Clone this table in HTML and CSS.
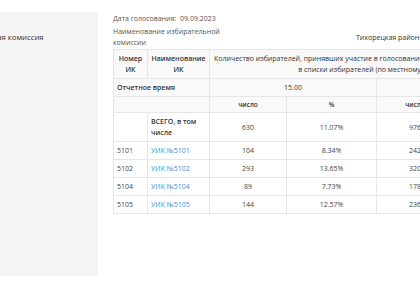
FILE: index.html
```html
<!DOCTYPE html>
<html lang="ru">
<head>
<meta charset="utf-8">
<title>Сведения о явке</title>
<link rel="stylesheet" href="styles.css">
</head>
<body>
<div class="page">
  <aside class="sidebar">
    <div class="side-item">Избирательная комиссия</div>
  </aside>
  <main class="main">
    <div class="info-row">
      <span class="label">Дата голосования:</span>
      <span class="value">09.09.2023</span>
    </div>
    <div class="name-row">
      <div class="label name-label">Наименование избирательной комиссии</div>
      <div class="name-value">Тихорецкая районная территориальная избирательная комиссия</div>
    </div>
    <table class="turnout">
      <colgroup>
        <col class="c-num">
        <col class="c-name">
        <col class="c-cnt">
        <col class="c-pct">
        <col class="c-cnt">
        <col class="c-pct">
      </colgroup>
      <thead>
        <tr>
          <th class="center">Номер ИК</th>
          <th class="center">Наименование ИК</th>
          <th colspan="4" class="center reg">Количество избирателей, принявших участие в голосовании, и процент от числа включенных<br>в списки избирателей (по местному времени)</th>
        </tr>
        <tr>
          <th colspan="2" class="left">Отчетное время</th>
          <th colspan="2" class="center reg">15.00</th>
          <th colspan="2" class="center reg">20.00</th>
        </tr>
        <tr class="sub">
          <th colspan="2"></th>
          <th class="center">число</th>
          <th class="center">%</th>
          <th class="center">число</th>
          <th class="center">%</th>
        </tr>
      </thead>
      <tbody>
        <tr>
          <td></td>
          <td class="total">ВСЕГО, в том числе</td>
          <td class="center">630</td>
          <td class="center">11.07%</td>
          <td class="center">976</td>
          <td class="center">17.15%</td>
        </tr>
        <tr>
          <td>5101</td>
          <td><a href="#">УИК №5101</a></td>
          <td class="center">104</td>
          <td class="center">8.34%</td>
          <td class="center">242</td>
          <td class="center">19.41%</td>
        </tr>
        <tr>
          <td>5102</td>
          <td><a href="#">УИК №5102</a></td>
          <td class="center">293</td>
          <td class="center">13.65%</td>
          <td class="center">320</td>
          <td class="center">14.90%</td>
        </tr>
        <tr>
          <td>5104</td>
          <td><a href="#">УИК №5104</a></td>
          <td class="center">89</td>
          <td class="center">7.73%</td>
          <td class="center">178</td>
          <td class="center">15.46%</td>
        </tr>
        <tr>
          <td>5105</td>
          <td><a href="#">УИК №5105</a></td>
          <td class="center">144</td>
          <td class="center">12.57%</td>
          <td class="center">236</td>
          <td class="center">20.59%</td>
        </tr>
      </tbody>
    </table>
  </main>
</div>
</body>
</html>
```
FILE: styles.css
```css
html, body {
  margin: 0;
  padding: 0;
  background: #ffffff;
  overflow: hidden;
}
body {
  font-family: "Open Sans", "Noto Sans", sans-serif;
  font-size: 7px;
  line-height: 11px;
  color: #444;
}
.page {
  display: flex;
  align-items: flex-start;
  width: 700px;
  margin-left: -57px;
}
.sidebar {
  flex: 0 0 155px;
  height: 264px;
  margin-top: 12px;
  background: #f5f5f5;
}
.side-item {
  padding: 20px 0 0 4px;
  font-size: 7.75px;
  color: #333;
}
.main {
  margin-left: 15px;
  padding-top: 13px;
}
.info-row {
  color: #555;
  margin-bottom: 2px;
}
.info-row .value {
  margin-left: 2px;
}
.label {
  color: #555;
}
.name-row {
  display: flex;
  align-items: center;
  margin-bottom: 1px;
}
.name-label {
  width: 112px;
}
.name-value {
  margin-left: 131px;
  white-space: nowrap;
  color: #333;
}
.turnout {
  table-layout: fixed;
  border-collapse: collapse;
  width: 430px;
}
.c-num { width: 34px; }
.c-name { width: 62px; }
.c-cnt { width: 77px; }
.c-pct { width: 90px; }
.turnout th,
.turnout td {
  border: 1px solid #e6e6e6;
  padding: 3px 3px;
  vertical-align: middle;
  text-align: left;
}
.turnout th {
  font-weight: 600;
  color: #333;
}
.turnout thead tr {
  background: #f9f9f9;
}
.turnout th.reg {
  font-weight: 400;
  color: #333;
  white-space: nowrap;
}
.turnout .center {
  text-align: center;
}
.turnout .sub th {
  font-size: 6.5px;
  line-height: 10px;
  padding: 3px 3px 2px;
}
.turnout .total {
  font-weight: 600;
  color: #333;
}
.turnout a {
  color: #3b8fd4;
  text-decoration: none;
}
```
